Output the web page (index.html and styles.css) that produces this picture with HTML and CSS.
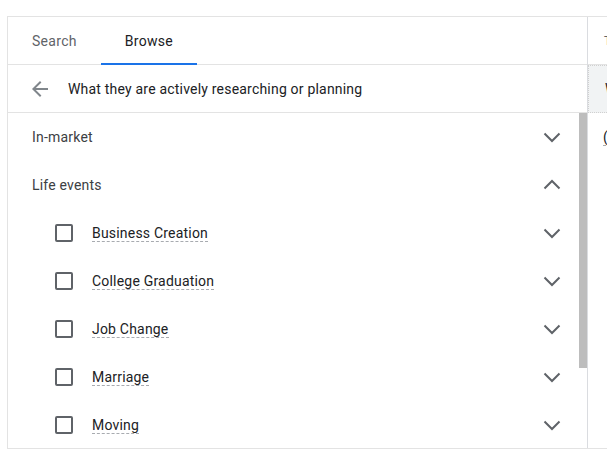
FILE: index.html
```html
<!DOCTYPE html>
<html>
<head>
<meta charset="utf-8">
<link rel="stylesheet" href="styles.css">
</head>
<body>
<div class="frame">
  <div class="picker">
    <div class="tabs">
      <div class="tab">Search</div>
      <div class="tab active">Browse</div>
    </div>
    <div class="crumb">
      <svg class="back" viewBox="0 0 24 24" width="24" height="24"><path d="M20 11H7.83l5.59-5.59L12 4l-8 8 8 8 1.41-1.41L7.83 13H20v-2z"/></svg>
      <span>What they are actively researching or planning</span>
    </div>
    <div class="scroller">
      <div class="list">
        <div class="row">
          <span class="head">In-market</span>
          <svg class="chev" viewBox="0 0 24 24" width="24" height="24"><polyline points="4.5,8.5 12,16 19.5,8.5"/></svg>
        </div>
        <div class="row">
          <span class="head">Life events</span>
          <svg class="chev" viewBox="0 0 24 24" width="24" height="24"><polyline points="4.5,15.5 12,8 19.5,15.5"/></svg>
        </div>
        <div class="row item">
          <span class="box"></span><span class="label">Business Creation</span>
          <svg class="chev" viewBox="0 0 24 24" width="24" height="24"><polyline points="4.5,8.5 12,16 19.5,8.5"/></svg>
        </div>
        <div class="row item">
          <span class="box"></span><span class="label">College Graduation</span>
          <svg class="chev" viewBox="0 0 24 24" width="24" height="24"><polyline points="4.5,8.5 12,16 19.5,8.5"/></svg>
        </div>
        <div class="row item">
          <span class="box"></span><span class="label">Job Change</span>
          <svg class="chev" viewBox="0 0 24 24" width="24" height="24"><polyline points="4.5,8.5 12,16 19.5,8.5"/></svg>
        </div>
        <div class="row item">
          <span class="box"></span><span class="label">Marriage</span>
          <svg class="chev" viewBox="0 0 24 24" width="24" height="24"><polyline points="4.5,8.5 12,16 19.5,8.5"/></svg>
        </div>
        <div class="row item">
          <span class="box"></span><span class="label">Moving</span>
          <svg class="chev" viewBox="0 0 24 24" width="24" height="24"><polyline points="4.5,8.5 12,16 19.5,8.5"/></svg>
        </div>
      </div>
      <div class="track"><div class="thumb"></div></div>
    </div>
  </div>
  <div class="selected">
    <div class="sel-head">Targeting</div>
    <div class="sel-group">What they are actively researching</div>
    <div class="sel-item"><span class="label">(Life events)</span></div>
  </div>
</div>
</body>
</html>
```
FILE: styles.css
```css
html, body {
  margin: 0;
  padding: 0;
  background: #ffffff;
  overflow: hidden;
  width: 607px;
  height: 463px;
}
body {
  font-family: Roboto, "Liberation Sans", Arial, sans-serif;
  font-size: 14px;
  letter-spacing: 0.2px;
  color: #3c4043;
}
.frame {
  display: flex;
  margin: 16px 0 0 7px;
  width: 760px;
  height: 433px;
  box-sizing: border-box;
  border: 1px solid #e3e3e3;
  border-right: none;
  overflow: hidden;
}
.picker {
  width: 580px;
  flex: none;
  box-sizing: border-box;
  border-right: 1px solid #dadce0;
  display: flex;
  flex-direction: column;
}
.tabs {
  display: flex;
  height: 47px;
  flex: none;
  border-bottom: 1px solid #e3e3e3;
}
.tab {
  padding: 1px 24px 0;
  display: flex;
  align-items: center;
  color: #5f6368;
  letter-spacing: 0.3px;
  box-sizing: border-box;
  border-bottom: 2px solid transparent;
  margin-bottom: -1px;
}
.tab.active {
  color: #202124;
  border-bottom-color: #1a73e8;
}
.crumb {
  height: 47px;
  flex: none;
  display: flex;
  align-items: center;
  border-bottom: 1px solid #e3e3e3;
  color: #202124;
}
.back {
  fill: #80868b;
  margin-left: 20px;
  margin-right: 16px;
}
.scroller {
  flex: 1;
  display: flex;
  overflow: hidden;
}
.list {
  flex: 1;
  display: flex;
  flex-direction: column;
}
.row {
  height: 48px;
  flex: none;
  display: flex;
  align-items: center;
  padding-left: 24px;
  padding-right: 15px;
}
.head {
  flex: 1;
  color: #3c4043;
}
.item {
  padding-left: 47px;
}
.box {
  width: 18px;
  height: 18px;
  box-sizing: border-box;
  border: 2px solid #5f6368;
  border-radius: 2px;
  flex: none;
  margin-right: 19px;
}
.label {
  line-height: 16px;
  border-bottom: 1px dashed #a8abb0;
  color: #202124;
}
.item .label {
  margin-right: auto;
}
.chev {
  flex: none;
  fill: none;
  stroke: #5f6368;
  stroke-width: 2;
}
.track {
  width: 8px;
  flex: none;
}
.thumb {
  height: 255px;
  background: #bdbdbd;
}
.selected {
  flex: 1;
  display: flex;
  flex-direction: column;
  white-space: nowrap;
}
.sel-head {
  height: 47px;
  display: flex;
  align-items: center;
  padding-left: 16px;
  color: #5f6368;
  font-size: 12px;
  border-bottom: 1px solid #e3e3e3;
}
.sel-group {
  height: 46px;
  display: flex;
  align-items: center;
  padding-left: 16px;
  background: #f1f3f4;
  border: 1px dotted #d0d0d0;
  color: #202124;
}
.sel-item {
  height: 48px;
  display: flex;
  align-items: center;
  padding-left: 15px;
}
```
